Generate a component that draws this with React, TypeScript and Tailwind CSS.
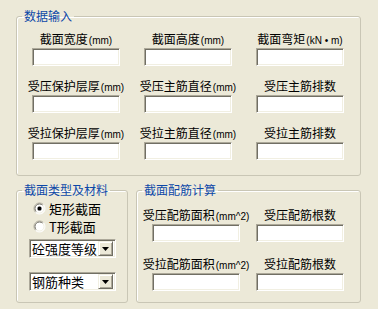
import React from "react";

const FONT = '"Noto Sans CJK SC", "Noto Sans", sans-serif';

const Field = ({ w = 88 }: { w?: number }) => (
  <div
    className="h-[18px] border border-t-[#ACA899] border-l-[#ACA899] border-b-white border-r-white bg-white shadow-[inset_1px_1px_0_#716F64,inset_-1px_-1px_0_#F1EFE2]"
    style={{ width: w }}
  />
);

const Unit = ({ children }: { children: React.ReactNode }) => (
  <span className="text-[10px] ml-[1px]" style={{ fontFamily: '"Liberation Sans", sans-serif' }}>
    {children}
  </span>
);

const Cell = ({ label, unit }: { label: string; unit?: string }) => (
  <div className="flex flex-col items-center">
    <div className="flex justify-center h-[14px] w-[88px] leading-[14px] whitespace-nowrap text-[12px] text-black">
      <span>
        {label}
        {unit && <Unit>{unit}</Unit>}
      </span>
    </div>
    <div className="mt-[2px]">
      <Field />
    </div>
  </div>
);

const Legend = ({ children }: { children: React.ReactNode }) => (
  <legend className="ml-[5px] px-[2px] text-[12px] leading-[12px] text-[#0D48A8]">{children}</legend>
);

const Radio = ({ checked }: { checked?: boolean }) => (
  <svg width="13" height="13" viewBox="0 0 13 13">
    <circle cx="6.5" cy="6.5" r="5.5" fill="#fff" />
    <path d="M2.6 10.4 A5.5 5.5 0 0 1 10.4 2.6" stroke="#ACA899" strokeWidth="1" fill="none" />
    <path d="M3.3 9.7 A4.5 4.5 0 0 1 9.7 3.3" stroke="#716F64" strokeWidth="1" fill="none" />
    <path d="M10.4 2.6 A5.5 5.5 0 0 1 2.6 10.4" stroke="#ffffff" strokeWidth="1" fill="none" />
    <path d="M9.7 3.3 A4.5 4.5 0 0 1 3.3 9.7" stroke="#F1EFE2" strokeWidth="1" fill="none" />
    {checked && <rect x="4.5" y="4.5" width="4" height="4" rx="1.5" fill="#000" />}
  </svg>
);

const Combo = ({ text }: { text: string }) => (
  <div className="flex items-center h-[19px] w-[87px] border border-t-[#ACA899] border-l-[#ACA899] border-b-white border-r-white bg-white shadow-[inset_1px_1px_0_#716F64,inset_-1px_-1px_0_#F1EFE2] pl-[2px] pr-[2px]">
    <span className="flex-1 text-[13px] leading-[15px] whitespace-nowrap text-black">{text}</span>
    <div className="flex items-center justify-center w-[15px] h-[15px] bg-[#ECE9D8] border border-t-[#F1EFE2] border-l-[#F1EFE2] border-b-[#716F64] border-r-[#716F64] shadow-[inset_1px_1px_0_#fff,inset_-1px_-1px_0_#ACA899]">
      <svg width="7" height="4" viewBox="0 0 7 4">
        <path d="M0 0 H7 L3.5 4 Z" fill="#000" />
      </svg>
    </div>
  </div>
);

export default function App() {
  return (
    <div
      className="w-[378px] h-[309px] bg-[#ECE9D8] px-[16px] pt-[10px] text-black"
      style={{ fontFamily: FONT }}
    >
      <fieldset className="w-[345px] h-[166px] border border-[#C9C6B5] rounded-[3px] shadow-[inset_1px_1px_0_#fff]">
        <Legend>数据输入</Legend>
        <div className="ml-[15px] pt-[10px] grid grid-cols-[88px_88px_88px] gap-x-[24px] gap-y-[13px]">
          <Cell label="截面宽度" unit="(mm)" />
          <Cell label="截面高度" unit="(mm)" />
          <Cell label="截面弯矩" unit="(kN • m)" />
          <Cell label="受压保护层厚" unit="(mm)" />
          <Cell label="受压主筋直径" unit="(mm)" />
          <Cell label="受压主筋排数" />
          <Cell label="受拉保护层厚" unit="(mm)" />
          <Cell label="受拉主筋直径" unit="(mm)" />
          <Cell label="受拉主筋排数" />
        </div>
      </fieldset>

      <div className="flex gap-[8px] mt-[8px]">
        <fieldset className="w-[112px] h-[119px] border border-[#C9C6B5] rounded-[3px] shadow-[inset_1px_1px_0_#fff]">
          <Legend>截面类型及材料</Legend>
          <div className="pt-[3px] flex flex-col">
            <div className="flex items-center h-[18px] pl-[16px] gap-[3px]">
              <Radio checked />
              <span className="text-[13px] leading-[15px] whitespace-nowrap">矩形截面</span>
            </div>
            <div className="flex items-center h-[18px] pl-[16px] gap-[3px]">
              <Radio />
              <span className="text-[13px] leading-[15px] whitespace-nowrap">T形截面</span>
            </div>
            <div className="ml-[12px] mt-[4px]">
              <Combo text="砼强度等级" />
            </div>
            <div className="ml-[12px] mt-[14px]">
              <Combo text="钢筋种类" />
            </div>
          </div>
        </fieldset>

        <fieldset className="w-[225px] h-[119px] border border-[#C9C6B5] rounded-[3px] shadow-[inset_1px_1px_0_#fff]">
          <Legend>截面配筋计算</Legend>
          <div className="ml-[15px] pt-[12px] grid grid-cols-[88px_88px] gap-x-[16px] gap-y-[15px]">
            <Cell label="受压配筋面积" unit="(mm^2)" />
            <Cell label="受压配筋根数" />
            <Cell label="受拉配筋面积" unit="(mm^2)" />
            <Cell label="受拉配筋根数" />
          </div>
        </fieldset>
      </div>
    </div>
  );
}
